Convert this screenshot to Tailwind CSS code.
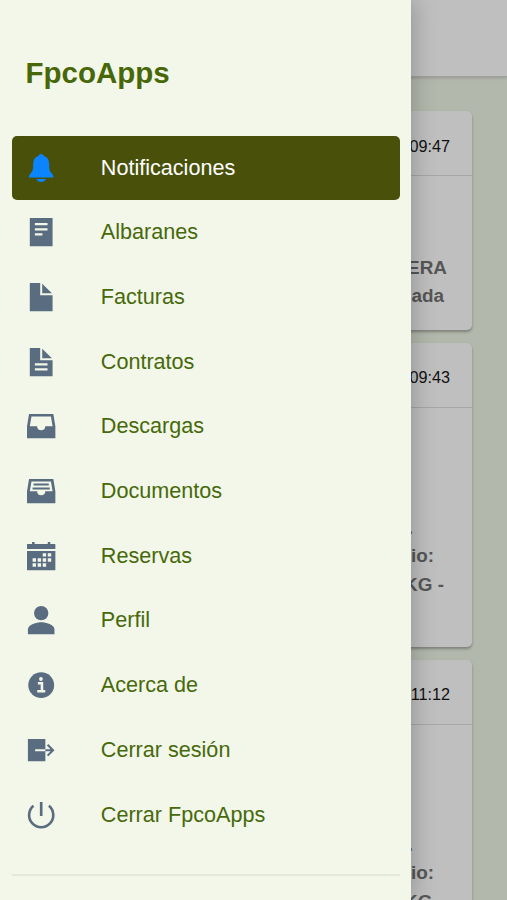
<!DOCTYPE html>
<html lang="es">
<head>
<meta charset="utf-8">
<title>FpcoApps</title>
<script src="https://cdn.jsdelivr.net/npm/@tailwindcss/browser@4"></script>
</head>
<body class="relative h-[900px] w-[507px] overflow-hidden bg-[#b3b8ad] font-['Liberation_Sans',Arial,sans-serif]">
<main class="flex h-full flex-col overflow-hidden">
  <header class="h-[77px] shrink-0 border-b border-[#a0a19f] bg-[#bfbfbf] shadow-[0_1px_3px_rgba(0,0,0,0.18)]"></header>
  <section class="flex flex-col gap-[13px] pt-[34px] pr-[35px] pl-[14px]">
    <article class="h-[219px] shrink-0 rounded-[5px] bg-[#bfbfbf] shadow-[0_2px_3px_rgba(0,0,0,0.3)]">
      <div class="flex h-[65px] items-center justify-end border-b border-[#a6a6a6] pt-[6px] pr-[22px] text-[16.2px] text-[#111]">09:47</div>
      <div class="pt-[78px] text-right text-[18.9px] leading-[28.35px] font-bold text-[#565656]">
        <p class="pr-[25px]">ERA</p><p class="pr-[28px]">ada</p>
      </div>
    </article>
    <article class="h-[304px] shrink-0 rounded-[5px] bg-[#bfbfbf] shadow-[0_2px_3px_rgba(0,0,0,0.3)]">
      <div class="flex h-[65px] items-center justify-end border-b border-[#a6a6a6] pt-[5px] pr-[22px] text-[16.2px] text-[#111]">09:43</div>
      <div class="pt-[106px] text-right text-[18.9px] leading-[28.35px] font-bold text-[#565656]">
        <p class="pr-[59px]">.</p><p class="pr-[38px]">io:</p><p class="pr-[28px]">KG -</p>
      </div>
    </article>
    <article class="h-[304px] shrink-0 rounded-[5px] bg-[#bfbfbf] shadow-[0_2px_3px_rgba(0,0,0,0.3)]">
      <div class="flex h-[65px] items-center justify-end border-b border-[#a6a6a6] pt-[5px] pr-[22px] text-[16.2px] text-[#111]">11:12</div>
      <div class="pt-[106px] text-right text-[18.9px] leading-[28.35px] font-bold text-[#565656]">
        <p class="pr-[59px]">.</p><p class="pr-[38px]">io:</p><p class="pr-[28px]">KG -</p>
      </div>
    </article>
  </section>
</main>
<aside class="absolute inset-y-0 left-0 w-[411px] bg-[#f2f7e9] pr-[11px] pl-[12px] shadow-[2px_0_22px_rgba(0,0,0,0.24)]">
  <h1 class="pt-[56px] pl-[13.5px] text-[29.5px] leading-[34px] font-bold text-[#476708]">FpcoApps</h1>
  <nav class="mt-[45.5px] flex flex-col border-b-2 border-[#e3e8db] pb-[27px] text-[21.6px] text-[#47690b]">
    <a class="flex h-[64.7px] items-center rounded-[5px] bg-[#49500a] pl-[13.4px] text-white"><svg class="mr-[43px] size-[32.4px] shrink-0 fill-[#0a84ff]" viewBox="0 0 512 512"><path d="M256 30c-24 0-38 14-42 34-62 20-84 66-84 130 0 78-6 104-32 134-20 22-36 40-36 76h388c0-36-16-54-36-76-26-30-32-56-32-134 0-64-22-110-84-130-4-20-18-34-42-34zM182 428h148c-10 30-38 46-74 46s-64-16-74-46z"/></svg>Notificaciones</a>
    <a class="flex h-[64.7px] items-center pl-[13.4px]"><svg class="mr-[43px] size-[32.4px] shrink-0 fill-[#5a6c80]" viewBox="0 0 512 512"><path fill-rule="evenodd" d="M76 32h360v448H76zM156 112v36h200v-36zM156 192v36h200v-36zM156 272v36h120v-36z"/></svg>Albaranes</a>
    <a class="flex h-[64.7px] items-center pl-[13.4px]"><svg class="mr-[43px] size-[32.4px] shrink-0 fill-[#5a6c80]" viewBox="0 0 512 512"><path d="M76 32h164v192h196v256H76zM272 42v150h154z"/></svg>Facturas</a>
    <a class="flex h-[64.7px] items-center pl-[13.4px]"><svg class="mr-[43px] size-[32.4px] shrink-0 fill-[#5a6c80]" viewBox="0 0 512 512"><path fill-rule="evenodd" d="M76 32h164v192h196v256H76zM272 42v150h154zM156 272v36h200v-36zM156 352v36h200v-36z"/></svg>Contratos</a>
    <a class="flex h-[64.7px] items-center pl-[13.4px]"><svg class="mr-[43px] size-[32.4px] shrink-0 fill-[#5a6c80]" viewBox="0 0 512 512"><path fill-rule="evenodd" d="M448 64H64L32 256v192h448V256zM436 256H320a64 64 0 01-128 0H76l26-152h308z"/></svg>Descargas</a>
    <a class="flex h-[64.7px] items-center pl-[13.4px]"><svg class="mr-[43px] size-[32.4px] shrink-0 fill-[#5a6c80]" viewBox="0 0 512 512"><path fill-rule="evenodd" d="M448 64H64L32 256v192h448V256zM436 256H320a64 64 0 01-128 0H76l26-152h308z"/><path d="M136 134h240v32H136zM120 198h272v32H120z"/></svg>Documentos</a>
    <a class="flex h-[64.7px] items-center pl-[13.4px]"><svg class="mr-[43px] size-[32.4px] shrink-0 fill-[#5a6c80]" viewBox="0 0 512 512"><path fill-rule="evenodd" d="M32 72q0-8 8-8h72V32h40v32h208V32h40v32h72q8 0 8 8v72H32zM32 172h448v300q0 8-8 8H40q-8 0-8-8zM280 208v54h54v-54zM360 208v54h54v-54zM120 288v54h54v-54zM200 288v54h54v-54zM280 288v54h54v-54zM360 288v54h54v-54zM120 368v54h54v-54zM200 368v54h54v-54zM280 368v54h54v-54z"/></svg>Reservas</a>
    <a class="flex h-[64.7px] items-center pl-[13.4px]"><svg class="mr-[43px] size-[32.4px] shrink-0 fill-[#5a6c80]" viewBox="0 0 512 512"><circle cx="256" cy="144" r="114"/><path d="M256 288c-70 0-210 37-210 112v80h420v-80c0-75-140-112-210-112z"/></svg>Perfil</a>
    <a class="flex h-[64.7px] items-center pl-[13.4px]"><svg class="mr-[43px] size-[32.4px] shrink-0 fill-[#5a6c80]" viewBox="0 0 512 512"><circle cx="256" cy="256" r="204"/><circle cx="252" cy="158" r="30" fill="#f2f7e9"/><path d="M204 226h64v122M194 352h126" fill="none" stroke="#f2f7e9" stroke-width="40"/></svg>Acerca de</a>
    <a class="flex h-[64.7px] items-center pl-[13.4px]"><svg class="mr-[43px] size-[32.4px] shrink-0 fill-[#5a6c80]" viewBox="0 0 512 512"><path d="M46 80h276v160H160v32h162v160H46zM322 240h82l-58-58 23-23 97 97-97 97-23-23 58-58h-82z"/></svg>Cerrar sesión</a>
    <a class="flex h-[64.7px] items-center pl-[13.4px]"><svg class="mr-[43px] size-[32.4px] shrink-0" viewBox="0 0 512 512"><path d="M378 108a191 191 0 11-244 0M256 48v220" fill="none" stroke="#5a6c80" stroke-width="42"/></svg>Cerrar FpcoApps</a>
  </nav>
</aside>
</body>
</html>
